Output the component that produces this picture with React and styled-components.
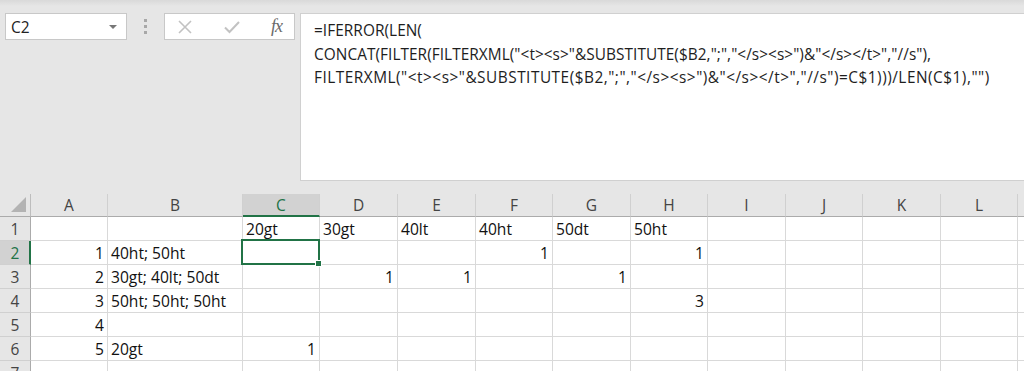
import React from 'react'
import styled, {createGlobalStyle} from 'styled-components'

const GlobalStyle = createGlobalStyle`
  html, body {
    margin: 0;
    padding: 0;
    background: #e6e6e6;
    overflow: hidden;
  }
  body {
    font-family: "Open Sans", "Noto Sans", sans-serif;
  }
`

const COLS = [
  {name: 'A', w: 77},
  {name: 'B', w: 135},
  {name: 'C', w: 77},
  {name: 'D', w: 78},
  {name: 'E', w: 78},
  {name: 'F', w: 77},
  {name: 'G', w: 78},
  {name: 'H', w: 77},
  {name: 'I', w: 78},
  {name: 'J', w: 77},
  {name: 'K', w: 78},
  {name: 'L', w: 77},
  {name: '', w: 40},
]

const DATA = [
  {C: '20gt', D: '30gt', E: '40lt', F: '40ht', G: '50dt', H: '50ht'},
  {A: 1, B: '40ht; 50ht', F: 1, H: 1},
  {A: 2, B: '30gt; 40lt; 50dt', D: 1, E: 1, G: 1},
  {A: 3, B: '50ht; 50ht; 50ht', H: 3},
  {A: 4},
  {A: 5, B: '20gt', C: 1},
  {},
]

// spread: extra letter spacing so each line spans the same width as in the shot
const FORMULA = [
  {text: '=IFERROR(LEN(', spread: 0.05},
  {text: 'CONCAT(FILTER(FILTERXML("<t><s>"&SUBSTITUTE($B2,";","</s><s>")&"</s></t>","//s"),', spread: 0.05},
  {text: 'FILTERXML("<t><s>"&SUBSTITUTE($B2,";","</s><s>")&"</s></t>","//s")=C$1)))/LEN(C$1),"")', spread: 0.5},
]

const App = () => {
  return (
    <>
      <GlobalStyle/>
      <Page>
        <TopBar>
          <NameBox>
            <span>C2</span>
            <DropArrow/>
          </NameBox>
          <Grip>
            <i/><i/><i/>
          </Grip>
          <ButtonsBox>
            <svg width="16" height="16" viewBox="0 0 16 16">
              <path d="M2 2 L14 14 M14 2 L2 14" stroke="#c2c2c2" strokeWidth="1.6" fill="none"/>
            </svg>
            <svg width="18" height="16" viewBox="0 0 18 16">
              <path d="M2 8.5 L6.5 13 L16 3" stroke="#c2c2c2" strokeWidth="2" fill="none"/>
            </svg>
            <Fx>fx</Fx>
          </ButtonsBox>
          <FormulaBox>
            {FORMULA.map((line, i) => <FormulaLine key={i} spread={line.spread}>{line.text}</FormulaLine>)}
          </FormulaBox>
        </TopBar>

        <Sheet>
          <Corner><CornerTriangle/></Corner>
          {COLS.map(c => (
            <ColHeader key={c.name || 'm'} active={c.name === 'C'}>{c.name}</ColHeader>
          ))}
          {DATA.map((row, r) => (
            <React.Fragment key={r}>
              <RowHeader active={r === 1}>{r + 1}</RowHeader>
              {COLS.map(c => {
                const v = row[c.name]
                return (
                  <Cell key={c.name || 'm'} num={typeof v === 'number'} selected={r === 1 && c.name === 'C'}>
                    {v}
                  </Cell>
                )
              })}
            </React.Fragment>
          ))}
        </Sheet>
      </Page>
    </>
  )
}

const Page = styled.div`
  width: 1024px;
  height: 371px;
  overflow: hidden;
  background: linear-gradient(#d9d9d9 0px, #e6e6e6 6px);
`
const TopBar = styled.div`
  display: flex;
  align-items: flex-start;
  padding-top: 13px;
  height: 168px;
  margin-bottom: 13px;
`
const NameBox = styled.div`
  margin-left: 5px;
  width: 122px;
  height: 27px;
  box-sizing: border-box;
  background: #fff;
  border: 1px solid #c8c8c8;
  display: flex;
  align-items: center;
  justify-content: space-between;
  padding: 0 9px 0 5px;
  font-size: 15.5px;
  color: #222;
`
const DropArrow = styled.span`
  width: 0;
  height: 0;
  border-left: 4px solid transparent;
  border-right: 4px solid transparent;
  border-top: 4px solid #777;
  margin-top: 1px;
`
const Grip = styled.div`
  width: 37px;
  height: 27px;
  display: flex;
  flex-direction: column;
  align-items: center;
  justify-content: center;
  gap: 3px;

  i {
    width: 3px;
    height: 3px;
    background: #a8a8a8;
  }
`
const ButtonsBox = styled.div`
  width: 131px;
  height: 27px;
  box-sizing: border-box;
  background: #fff;
  border: 1px solid #c8c8c8;
  display: flex;
  align-items: center;
  justify-content: space-between;
  padding: 0 12px 0 12px;
  margin-right: 5px;
`
const Fx = styled.span`
  font-family: "Liberation Serif", "DejaVu Serif", serif;
  font-style: italic;
  font-size: 18px;
  color: #6a6a6a;
  letter-spacing: -1px;
`
const FormulaBox = styled.div`
  flex: 1;
  height: 168px;
  box-sizing: border-box;
  background: #fff;
  border: 1px solid #d0d0d0;
  border-right: none;
  padding: 5px 0 0 13px;
  color: #1e1e1e;
  font-size: 15.4px;
`
const FormulaLine = styled.div`
  height: 23.5px;
  line-height: 23.5px;
  white-space: nowrap;
  letter-spacing: ${p => p.spread}px;
`
const Sheet = styled.div`
  display: grid;
  grid-template-columns: 31px ${COLS.map(c => c.w + 'px').join(' ')};
  grid-template-rows: 23px repeat(7, 24px);
  background: #fff;
  font-size: 15.6px;
  color: #111;
`
const Corner = styled.div`
  position: relative;
  background: #e6e6e6;
  border-right: 1px solid #bdbdbd;
  border-bottom: 1px solid #ababab;
  box-sizing: border-box;
`
const CornerTriangle = styled.div`
  position: absolute;
  right: 4px;
  bottom: 4px;
  width: 0;
  height: 0;
  border-left: 15px solid transparent;
  border-bottom: 15px solid #b3b3b3;
`
const ColHeader = styled.div`
  box-sizing: border-box;
  background: ${p => (p.active ? '#d2d2d2' : '#e6e6e6')};
  color: ${p => (p.active ? '#217346' : '#444')};
  border-bottom: ${p => (p.active ? '2px solid #217346' : '1px solid #ababab')};
  border-right: 1px solid #d0d0d0;
  display: flex;
  align-items: center;
  justify-content: center;
  font-size: 15.5px;
  padding-top: ${p => (p.active ? '1px' : '0')};
`
const RowHeader = styled.div`
  box-sizing: border-box;
  background: ${p => (p.active ? '#d2d2d2' : '#e6e6e6')};
  color: ${p => (p.active ? '#217346' : '#444')};
  border-right: ${p => (p.active ? '2px solid #217346' : '1px solid #ababab')};
  border-bottom: 1px solid #d0d0d0;
  display: flex;
  align-items: center;
  justify-content: center;
  font-size: 15.5px;
  padding-left: ${p => (p.active ? '1px' : '0')};
`
const Cell = styled.div`
  position: relative;
  box-sizing: border-box;
  border-right: 1px solid #d9d9d9;
  border-bottom: 1px solid #d9d9d9;
  display: flex;
  align-items: center;
  justify-content: ${p => (p.num ? 'flex-end' : 'flex-start')};
  padding: 1px 3px 0 3px;
  white-space: nowrap;

  ${p => p.selected && `
    &::after {
      content: '';
      position: absolute;
      top: -2px;
      left: -2px;
      right: -1px;
      bottom: -1px;
      border: 2px solid #217346;
    }
    &::before {
      content: '';
      position: absolute;
      right: -3px;
      bottom: -3px;
      width: 5px;
      height: 5px;
      background: #217346;
      border: 1px solid #fff;
      z-index: 1;
    }
  `}
`

export default App
